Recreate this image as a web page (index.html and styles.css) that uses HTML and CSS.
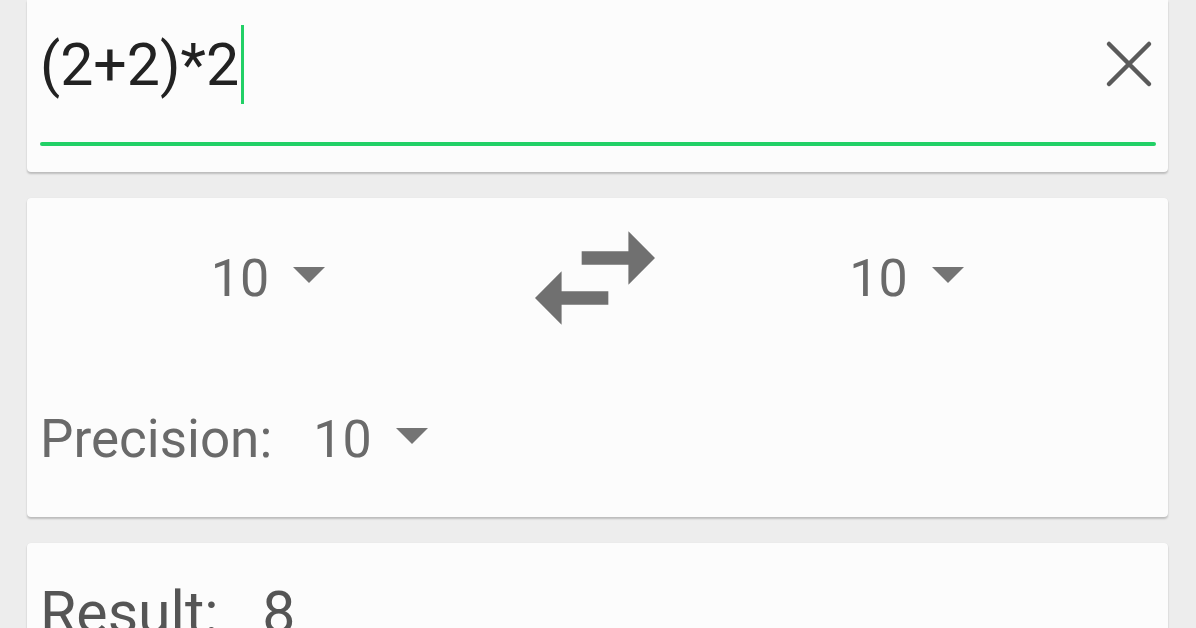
FILE: index.html
```html
<!DOCTYPE html>
<html lang="en">
<head>
  <meta charset="UTF-8">
  <title>Calculator</title>
  <meta name="viewport" content="width=device-width, initial-scale=1">
  <link rel="stylesheet" href="styles.css">
</head>
<body>
  <div class="page">

    <!-- expression input -->
    <div class="card input-card">
      <div class="expr-row">
        <span class="expr">(2+2)*2</span><span class="caret"></span>
        <button class="clear-btn" title="Clear">
          <svg width="48" height="48" viewBox="0 0 48 48">
            <path d="M4 4L44 44M44 4L4 44" stroke="#5a5a5a" stroke-width="4.5" stroke-linecap="round" fill="none"/>
          </svg>
        </button>
      </div>
      <div class="underline"></div>
    </div>

    <!-- base selection -->
    <div class="card base-card">
      <div class="base-row">
        <div class="picker">
          <span class="picker-value">10</span><span class="caret-down"></span>
        </div>
        <button class="swap-btn" title="Swap">
          <svg width="160" height="160" viewBox="0 0 24 24">
            <path d="M6.99 11L3 15l3.99 4v-3H14v-2H6.99v-3zM21 9l-3.99-4v3H10v2h7.01v3L21 9z" fill="#707070"/>
          </svg>
        </button>
        <div class="picker">
          <span class="picker-value">10</span><span class="caret-down"></span>
        </div>
      </div>
      <div class="precision-row">
        <span class="label">Precision:</span>
        <div class="picker">
          <span class="picker-value">10</span><span class="caret-down"></span>
        </div>
      </div>
    </div>

    <!-- output -->
    <div class="card result-card">
      <span class="result-label">Result:</span>
      <span class="result-value">8</span>
    </div>

  </div>
</body>
</html>
```

FILE: styles.css
```css
:root {
  --bg: #ededed;
  --card: #fcfcfc;
  --accent: #22d066;
  --text: #222;
  --muted: #6a6a6a;
}

* {
  box-sizing: border-box;
}

body {
  margin: 0;
  font-family: Roboto, 'Noto Sans', sans-serif;
  background-color: var(--bg);
  color: var(--text);
  overflow: hidden;
}

.page {
  padding: 0 28px 0 27px;
  display: flex;
  flex-direction: column;
  gap: 26px;
}

.card {
  background-color: var(--card);
  border-radius: 4px;
  box-shadow: 0 2px 2px rgba(0,0,0,0.2), 0 0 1px rgba(0,0,0,0.08);
}

/* input card */
.input-card {
  height: 172px;
  padding: 0 12px 0 13px;
  border-top-left-radius: 0;
  border-top-right-radius: 0;
}

.expr-row {
  height: 128px;
  display: flex;
  align-items: center;
}

.expr {
  font-size: 59px;
  color: var(--text);
}

.caret {
  width: 3px;
  height: 79px;
  background-color: var(--accent);
  margin-left: 2px;
}

.clear-btn {
  margin-left: auto;
  margin-right: 3px;
  background: none;
  border: none;
  padding: 0;
  display: flex;
  cursor: pointer;
}

.underline {
  height: 4px;
  margin-top: 14px;
  background-color: var(--accent);
  border-radius: 2px;
}

/* base card */
.base-card {
  height: 319px;
}

.base-row {
  height: 160px;
  display: grid;
  grid-template-columns: 488px 160px 1fr;
  align-items: center;
  justify-items: center;
  padding-right: 30px;
}

.base-row > .picker:first-child {
  margin-right: 6px;
}

.swap-btn {
  background: none;
  border: none;
  padding: 0;
  display: flex;
  cursor: pointer;
}

.picker {
  display: flex;
  align-items: center;
  cursor: pointer;
}

.picker-value {
  font-size: 52px;
  color: var(--muted);
}

.caret-down {
  width: 0;
  height: 0;
  border-left: 16px solid transparent;
  border-right: 16px solid transparent;
  border-top: 16px solid #747474;
  margin-left: 24px;
  margin-bottom: 6px;
}

.precision-row {
  margin-top: 50px;
  padding-left: 13px;
  display: flex;
  align-items: center;
  gap: 41px;
}

.label {
  font-size: 53px;
  color: var(--muted);
}

/* result card */
.result-card {
  height: 120px;
  padding: 35px 0 0 13px;
  font-size: 59px;
  color: #555;
}

.result-value {
  margin-left: 29px;
}
```
